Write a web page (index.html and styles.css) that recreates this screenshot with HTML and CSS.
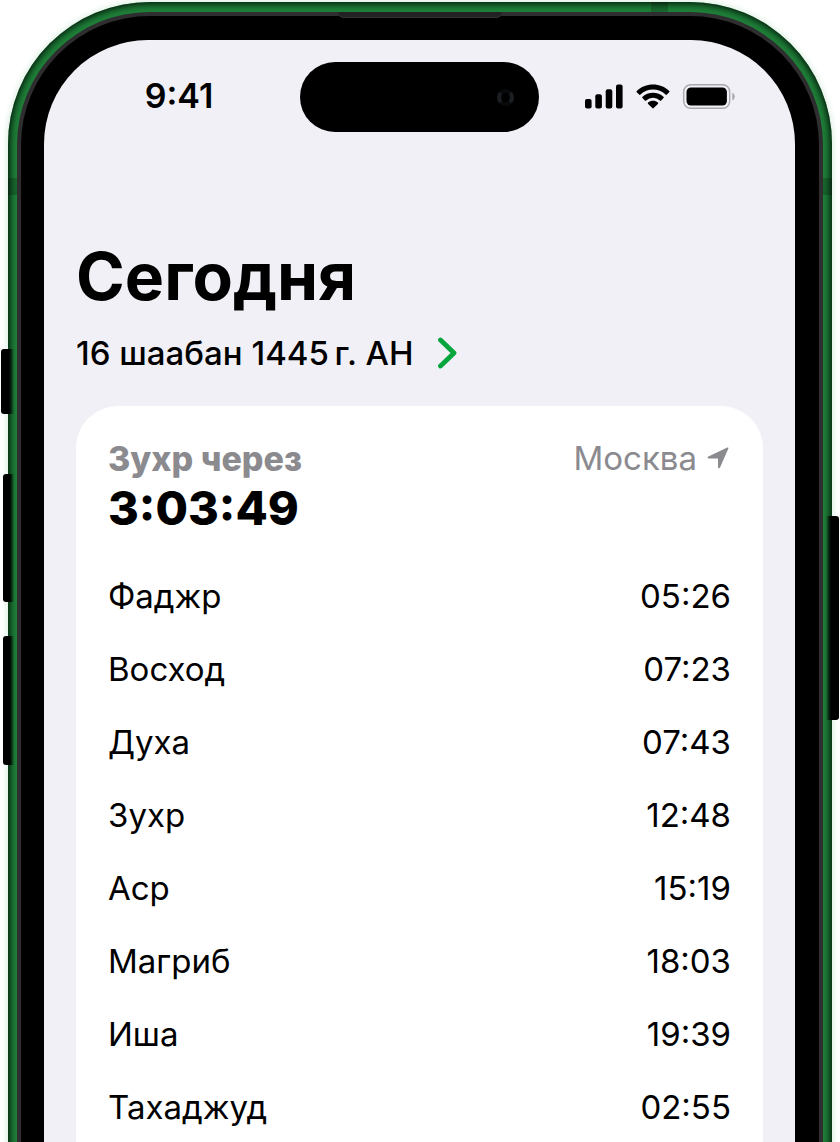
FILE: index.html
```html
<!DOCTYPE html>
<html lang="ru">
<head>
<meta charset="utf-8">
<meta name="viewport" content="width=device-width, initial-scale=1">
<title>Сегодня</title>
<link rel="stylesheet" href="styles.css">
</head>
<body>
<div class="phone">
  <span class="key key-action"></span>
  <span class="key key-up"></span>
  <span class="key key-down"></span>
  <span class="key key-power"></span>
  <div class="frame">
    <span class="band band-left"></span>
    <span class="band band-right"></span>
    <span class="band band-top"></span>
    <div class="ring">
      <span class="speaker"></span>
      <div class="bezel">
        <div class="screen">
          <header class="status">
            <time class="clock">9:41</time>
            <div class="island"><span class="lens"></span></div>
            <div class="indicators">
              <svg width="38" height="25" viewBox="0 0 38 25" aria-label="Сигнал">
                <rect x="0" y="15" width="6.6" height="9.5" rx="2"/>
                <rect x="10.3" y="10.3" width="6.6" height="14.2" rx="2"/>
                <rect x="20.7" y="5.2" width="6.6" height="19.3" rx="2"/>
                <rect x="31" y="0.5" width="6.6" height="24" rx="2"/>
              </svg>
              <svg width="34" height="25" viewBox="0 0 34 25" aria-label="Wi-Fi">
                <path d="M17 .5C23.300 .5 29 2.900 33.200 6.900Q33.900 7.600 33.200 8.300L30.900 10.600Q30.200 11.200 29.500 10.600A18.100 18.100 0 0 0 4.500 10.600Q3.800 11.200 3.100 10.600L.8 8.300Q.1 7.600 .8 6.900C5 2.900 10.700 .5 17 .5Z"/>
                <path d="M17 8.700C21 8.700 24.700 10.200 27.500 12.700Q28.200 13.400 27.500 14.100L25.200 16.400Q24.600 17 23.900 16.400A10.200 10.200 0 0 0 10.100 16.400Q9.400 17 8.800 16.400L6.500 14.100Q5.800 13.400 6.500 12.700C9.300 10.200 13 8.700 17 8.700Z"/>
                <path d="M17 16.800C18.900 16.800 20.600 17.400 21.900 18.500Q22.600 19.200 21.900 19.900L17.700 24.100Q17 24.800 16.300 24.100L12.100 19.900Q11.400 19.200 12.100 18.500C13.400 17.400 15.100 16.800 17 16.800Z"/>
              </svg>
              <svg width="52" height="25" viewBox="0 0 52 25" aria-label="Батарея">
                <rect x=".7" y=".7" width="46" height="23.600" rx="7" fill="none" stroke="#a9a8ad" stroke-width="1.400"/>
                <rect x="3.500" y="3.500" width="40.400" height="18" rx="4.500"/>
                <path d="M49.300 8.500Q51.800 9.800 51.800 12.500T49.300 16.500Z" fill="#a9a8ad"/>
              </svg>
            </div>
          </header>
          <main class="content">
            <h1 class="title">Сегодня</h1>
            <button class="date" type="button">
              <span>16 шаабан 1445&#8239;г. АН</span>
              <svg width="20" height="32" viewBox="0 0 20 32" aria-hidden="true"><path d="M3.500 3 17 16 3.500 29" fill="none" stroke="#06a53d" stroke-width="4.800" stroke-linecap="round" stroke-linejoin="round"/></svg>
            </button>
            <section class="card">
              <div class="summary">
                <div class="next">
                  <p class="next-label">Зухр через</p>
                  <p class="countdown">3:03:49</p>
                </div>
                <p class="place">Москва
                  <svg width="22" height="22" viewBox="0 0 22 22" aria-hidden="true"><path d="M20.300 .6Q21.800 .1 21.300 1.700L13 20.500Q12.500 21.500 11.700 21.300 11 21.100 11 20.200V11.500H1.700Q.8 11.500 .6 10.700.5 9.900 1.400 9.400Z" fill="#8a8a8f"/></svg>
                </p>
              </div>
              <table class="times">
                <tbody>
                  <tr><th scope="row">Фаджр</th><td>05:26</td></tr>
                  <tr><th scope="row">Восход</th><td>07:23</td></tr>
                  <tr><th scope="row">Духа</th><td>07:43</td></tr>
                  <tr><th scope="row">Зухр</th><td>12:48</td></tr>
                  <tr><th scope="row">Аср</th><td>15:19</td></tr>
                  <tr><th scope="row">Магриб</th><td>18:03</td></tr>
                  <tr><th scope="row">Иша</th><td>19:39</td></tr>
                  <tr><th scope="row">Тахаджуд</th><td>02:55</td></tr>
                </tbody>
              </table>
            </section>
          </main>
        </div>
      </div>
    </div>
  </div>
</div>
</body>
</html>
```
FILE: styles.css
```css
* { box-sizing: border-box; }

body {
  margin: 0;
  background: #fff;
  color: #000;
  font-family: Inter, "Liberation Sans", sans-serif;
  font-size: 33px;
}

h1, p { margin: 0; }

/* Device body, cut off by the bottom of the window */
.phone {
  position: relative;
  height: 100vh;
  overflow: hidden;
  padding: 2px 8px 0;
}

.frame {
  position: relative;
  padding: 10px 9px 0;
  border-radius: 142px 142px 0 0;
  background: #1f8139;
  box-shadow:
    inset 0 0 7px 2px #03150a,
    0 0 6px 1px #d8ecdd;
}

.ring {
  position: relative;
  padding: 4px 4px 0;
  border-radius: 133px 133px 0 0;
  background: #2e2d2f;
}

.bezel {
  padding: 24px 24px 0 23px;
  border-radius: 129px 129px 0 0;
  background: #000;
}

.screen {
  padding-top: 22px;
  border-radius: 104px 104px 0 0;
  background: #f1f0f6;
}

.key {
  position: absolute;
  z-index: 1;
  background: linear-gradient(to right, #000 60%, #00000000);
}

.key-action { left: 1px; top: 349px; width: 13px; height: 65px; border-radius: 3px 0 0 3px; }
.key-up { left: 3px; top: 474px; width: 11px; height: 128px; border-radius: 3px 0 0 3px; }
.key-down { left: 3px; top: 636px; width: 11px; height: 129px; border-radius: 3px 0 0 3px; }
.key-power {
  right: 1px;
  top: 516px;
  width: 13px;
  height: 204px;
  border-radius: 0 3px 3px 0;
  background: linear-gradient(to left, #000 60%, #00000000);
}

.band {
  position: absolute;
  background: #00000033;
}

.band-left { left: 0; top: 176px; width: 9px; height: 17px; }
.band-right { right: 0; top: 176px; width: 9px; height: 17px; }
.band-top { right: 164px; top: 0; width: 17px; height: 10px; }

.speaker {
  position: absolute;
  top: 0;
  left: 50%;
  width: 163px;
  height: 6px;
  transform: translateX(-50%);
  border-bottom: 1px solid #353535;
  border-radius: 0 0 5px 5px;
  background: #222123;
}

/* Status bar */
.status {
  display: grid;
  grid-template-columns: 1fr auto 1fr;
  align-items: center;
  justify-items: center;
}

.clock {
  padding-left: 14px;
  padding-bottom: 2px;
  font-size: 34px;
  font-weight: 600;
  line-height: 42px;
}

.island {
  display: flex;
  align-items: center;
  justify-content: flex-end;
  width: 239px;
  height: 70px;
  padding-right: 25px;
  border-radius: 35px;
  background: #000;
}

.lens {
  width: 17px;
  height: 17px;
  border: 4px solid #1b1f24;
  border-top-color: #090a0c;
  border-bottom-color: #090a0c;
  border-radius: 50%;
}

.indicators {
  display: flex;
  gap: 13px;
  padding-right: 15px;
  padding-bottom: 2px;
}

.indicators svg { display: block; }

/* Today */
.content { padding: 104px 32px 0; }

.title {
  font-size: 66px;
  line-height: 80px;
  font-weight: 700;
}

.date {
  display: flex;
  align-items: center;
  gap: 23px;
  margin-top: 16px;
  padding: 0;
  border: 0;
  background: none;
  color: inherit;
  font: inherit;
  font-weight: 500;
  line-height: 42px;
  cursor: pointer;
}

.card {
  min-height: 100vh;
  margin-top: 32px;
  padding: 32px;
  border-radius: 42px;
  background: #fff;
}

.summary {
  display: flex;
  justify-content: space-between;
}

.next-label {
  color: #8a8a8f;
  font-size: 34px;
  font-weight: 800;
  line-height: 42px;
}

.countdown {
  font-size: 47px;
  font-weight: 800;
  line-height: 56px;
}

.place {
  display: flex;
  align-items: center;
  align-self: flex-start;
  gap: 10px;
  padding-right: 2px;
  color: #8a8a8f;
  line-height: 40px;
}

.times {
  width: 100%;
  margin-top: 23px;
  border-collapse: collapse;
}

.times th,
.times td {
  height: 73px;
  padding: 0;
  font-weight: 400;
  text-align: left;
}

.times td { text-align: right; }
```
